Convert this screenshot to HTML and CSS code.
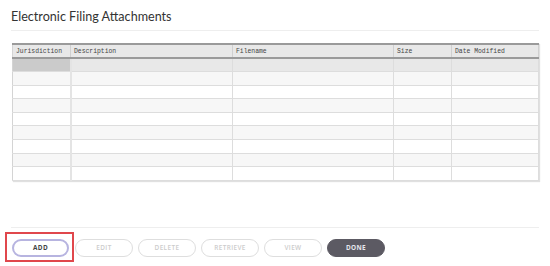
FILE: index.html
```html
<!DOCTYPE html>
<html lang="en">
<head>
  <meta charset="UTF-8" />
  <title>Electronic Filing Attachments</title>
  <link rel="stylesheet" href="styles.css">
</head>
<body>
  <div class="panel">
    <h1 class="panel-title">Electronic Filing Attachments</h1>

    <div class="grid-wrap">
      <table class="grid">
        <colgroup>
          <col class="col-jur">
          <col class="col-desc">
          <col class="col-file">
          <col class="col-size">
          <col class="col-date">
        </colgroup>
        <thead>
          <tr>
            <th>Jurisdiction</th>
            <th>Description</th>
            <th>Filename</th>
            <th>Size</th>
            <th>Date Modified</th>
          </tr>
        </thead>
        <tbody>
          <tr class="selected"><td class="active"></td><td></td><td></td><td></td><td></td></tr>
          <tr class="alt"><td></td><td></td><td></td><td></td><td></td></tr>
          <tr><td></td><td></td><td></td><td></td><td></td></tr>
          <tr class="alt"><td></td><td></td><td></td><td></td><td></td></tr>
          <tr><td></td><td></td><td></td><td></td><td></td></tr>
          <tr class="alt"><td></td><td></td><td></td><td></td><td></td></tr>
          <tr><td></td><td></td><td></td><td></td><td></td></tr>
          <tr class="alt"><td></td><td></td><td></td><td></td><td></td></tr>
          <tr><td></td><td></td><td></td><td></td><td></td></tr>
        </tbody>
      </table>
    </div>

    <div class="actions">
      <span class="focus-ring"><button class="btn btn-primary">ADD</button></span>
      <button class="btn" disabled>EDIT</button>
      <button class="btn" disabled>DELETE</button>
      <button class="btn" disabled>RETRIEVE</button>
      <button class="btn" disabled>VIEW</button>
      <button class="btn btn-dark">DONE</button>
    </div>
  </div>
</body>
</html>
```

FILE: styles.css
```css
/* Basic reset */
* {
  margin: 0;
  padding: 0;
  box-sizing: border-box;
}

body {
  background-color: #ffffff;
  color: #333333;
  font-family: Lato, "Open Sans", sans-serif;
}

.panel {
  width: 550px;
  height: 266px;
  padding: 8px 11px 0 11px;
  display: flex;
  flex-direction: column;
}

/* Title */
.panel-title {
  font-size: 12.6px;
  font-weight: normal;
  color: #333333;
  line-height: 17px;
  padding-bottom: 5px;
  border-bottom: 1px solid #eeeeee;
}

/* Grid */
.grid-wrap {
  margin: 12px 0 0 1px;
  width: 527px;
  box-shadow: 1px 1px 1px rgba(0, 0, 0, 0.12);
}

.grid {
  width: 100%;
  border-collapse: collapse;
  table-layout: fixed;
  border: 1px solid #d4d4d4;
  border-top: 2px solid #9a9a9a;
}

.col-jur { width: 58px; }
.col-desc { width: 162px; }
.col-file { width: 161px; }
.col-size { width: 58px; }

.grid th {
  height: 14px;
  background-color: #e8e8e8;
  border-bottom: 2px solid #9a9a9a;
  border-right: 1px solid #d0d0d0;
  font-family: "Liberation Mono", monospace;
  font-size: 6.4px;
  font-weight: normal;
  color: #444444;
  text-align: left;
  padding: 0 3px;
  vertical-align: middle;
}

.grid td {
  height: 13.6px;
  border-bottom: 1px solid #dddddd;
  border-right: 1px solid #dddddd;
}

.grid td:first-child {
  border-right: 2px solid #e4e4e4;
}

.grid tr.alt td {
  background-color: #f7f7f7;
}

.grid tr.selected td {
  background-color: #e8e8e8;
}

.grid tr.selected td.active {
  background-color: #cbcbcb;
}

/* Buttons */
.actions {
  margin-top: 46px;
  padding-top: 11px;
  border-top: 1px solid #eeeeee;
  width: 528px;
  display: flex;
  align-items: center;
  gap: 5px;
}

.focus-ring {
  display: inline-flex;
  margin: -7px -4px -5px -6px;
  padding: 5px 3px 3px 5px;
  border: 2px solid #e0474c;
}

.btn {
  width: 58px;
  height: 18px;
  border-radius: 9px;
  border: 1px solid #dedede;
  background-color: #ffffff;
  color: #cccccc;
  font-family: "Open Sans", sans-serif;
  font-size: 6.4px;
  font-weight: 600;
  letter-spacing: 0.4px;
}

.btn-primary {
  width: 57px;
  border: 2px solid #b7b4e0;
  color: #444444;
  font-weight: 700;
}

.btn-dark {
  background-color: #5c5a63;
  border-color: #5c5a63;
  color: #e6e6ee;
  font-weight: 700;
}
```
